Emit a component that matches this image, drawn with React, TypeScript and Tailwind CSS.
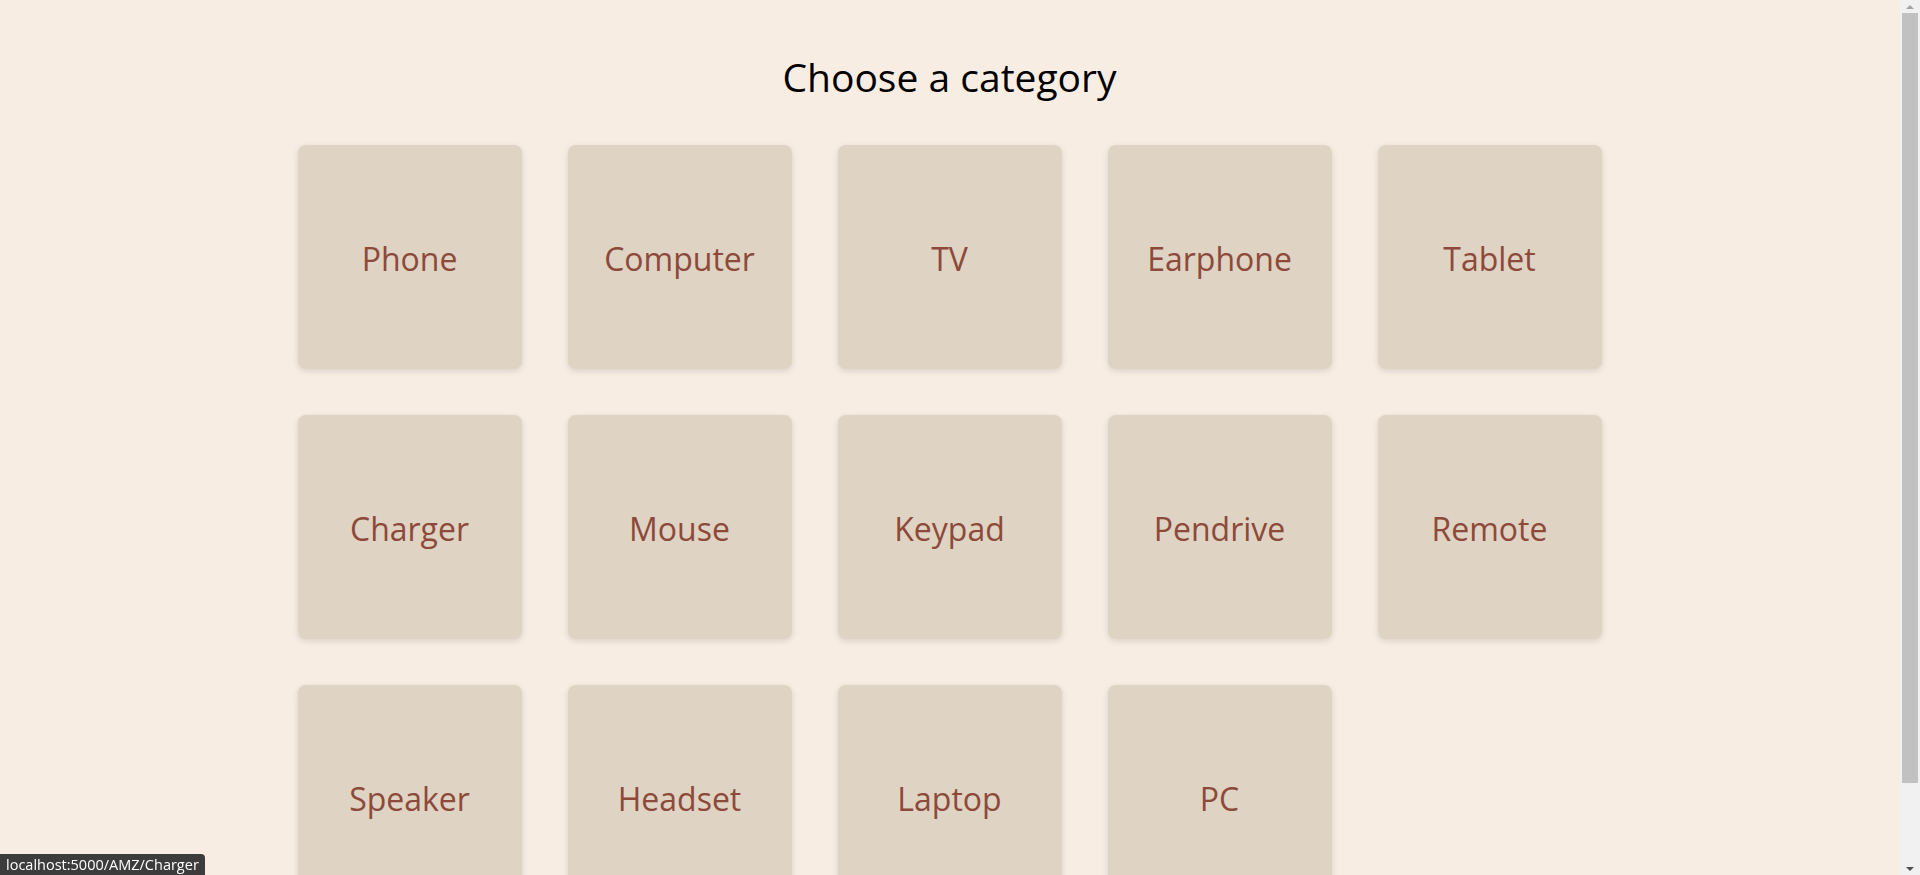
import React from "react";

const categories = [
  "Phone",
  "Computer",
  "TV",
  "Earphone",
  "Tablet",
  "Charger",
  "Mouse",
  "Keypad",
  "Pendrive",
  "Remote",
  "Speaker",
  "Headset",
  "Laptop",
  "PC",
];

const App = () => {
  return (
    <div
      className="min-h-screen bg-[#f8ede3] pb-[60px] pr-[21px]"
      style={{ fontFamily: '"Segoe UI", "Open Sans", "Noto Sans", sans-serif' }}
    >
      <h1 className="pt-[50px] pb-[41px] text-center text-[39px] leading-[54px] text-black">
        Choose a category
      </h1>
      <div className="mx-auto grid w-fit grid-cols-[repeat(5,224px)] gap-[46px]">
        {categories.map((name) => (
          <a
            key={name}
            href={`/AMZ/${name}`}
            className="flex h-[224px] w-[224px] items-center justify-center rounded-lg bg-[#dfd3c3] pt-[4px] text-[32px] text-[#8d493a] shadow-[0_2px_6px_rgba(0,0,0,0.12)]"
          >
            {name}
          </a>
        ))}
      </div>

      {/* status bubble */}
      <div className="fixed bottom-0 left-0 rounded-tr-[4px] bg-[#3c3c3c] px-[6px] py-[1px] text-[14.5px] leading-[19px] text-white">
        localhost:5000/AMZ/Charger
      </div>

      {/* scrollbar */}
      <div className="fixed right-0 top-0 flex h-screen w-[20px] flex-col items-center bg-[#f1f1f1]">
        <div className="flex h-[13px] w-full items-center justify-center">
          <div className="h-0 w-0 border-x-[4px] border-b-[4px] border-x-transparent border-b-[#a3a3a3]" />
        </div>
        <div className="h-[770px] w-[16px] bg-[#c1c1c1]" />
        <div className="flex-1" />
        <div className="flex h-[13px] w-full items-center justify-center">
          <div className="h-0 w-0 border-x-[4px] border-t-[4px] border-x-transparent border-t-[#505050]" />
        </div>
      </div>
    </div>
  );
};

export default App;
